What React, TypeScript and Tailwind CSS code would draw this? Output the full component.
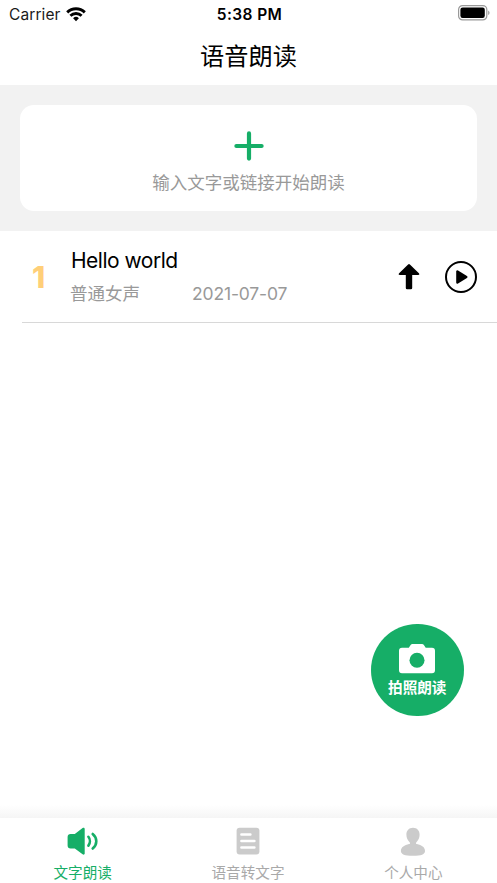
import type { ReactNode } from "react";

const RECORDS = [{ id: 1, title: "Hello world", voice: "普通女声", date: "2021-07-07" }];

function WifiIcon() {
  return (
    <svg width="20" height="15" viewBox="0 0 20 15" fill="none" stroke="#000" strokeWidth="2.9">
      <path d="M1.2 5.4a12.6 12.6 0 0 1 17.6 0" />
      <path d="M4.4 8.8a8.1 8.1 0 0 1 11.2 0" />
      <path d="M10 14.2l-2.9-2.9a4.1 4.1 0 0 1 5.8 0z" fill="#000" stroke="none" />
    </svg>
  );
}

function BatteryIcon() {
  return (
    <svg width="32" height="16" viewBox="0 0 32 16">
      <rect x="0.6" y="0.6" width="28.2" height="14.3" rx="4" fill="none" stroke="#999" strokeWidth="1.2" />
      <rect x="2.4" y="2.6" width="24.4" height="10.4" rx="2.2" fill="#000" />
      <path d="M30.2 5.4c1.8.8 1.8 3.9 0 4.7z" fill="#999" />
    </svg>
  );
}

function SpeakerIcon() {
  return (
    <svg width="32" height="28" viewBox="0 0 32 28" fill="none">
      <path
        d="M3.6 7h4.2l7.8-5.9c.9-.7 2.1-.3 2.1.8v24.6c0 1.1-1.2 1.5-2.1.8l-7.8-5.7H3.6C1.6 21.6.6 20.4.6 18.6V10C.6 8.2 1.7 7 3.6 7z"
        fill="#16ae67"
      />
      <path d="M21.4 9.8c2 2.5 2 6.2 0 8.8" stroke="#16ae67" strokeWidth="2.6" strokeLinecap="round" />
      <path d="M25.7 7c4.8 4 4.8 10.5 0 14.5" stroke="#16ae67" strokeWidth="2.6" strokeLinecap="round" />
    </svg>
  );
}

function DocumentIcon() {
  return (
    <svg width="24" height="28" viewBox="0 0 24 28" fill="none">
      <rect x="0.6" y="0.8" width="22.8" height="26.6" rx="3" fill="#cbcbcb" />
      <path d="M5.4 7.6h9M5.4 14h13M5.4 20.5h13" stroke="#fff" strokeWidth="2.5" strokeLinecap="round" />
    </svg>
  );
}

function PersonIcon() {
  return (
    <svg width="26" height="29" viewBox="0 0 26 29" fill="#cbcbcb">
      <path d="M13 .8c4 0 6.6 2.8 6.6 6.9 0 3-1.3 5.6-3.4 7.7-.5.8-.2 1.5.7 1.7 4.7.9 8.1 3.3 8.1 6.8 0 3.2-3.6 4.9-12 4.9S.9 27.1.9 23.9c0-3.5 3.5-5.9 8.2-6.8.9-.2 1.2-.9.7-1.7-2.1-2.1-3.4-4.7-3.4-7.7C6.4 3.6 9 .8 13 .8z" />
    </svg>
  );
}

function TabItem({ label, active, children }: { label: string; active?: boolean; children: ReactNode }) {
  return (
    <button
      type="button"
      className={`flex flex-1 flex-col items-center pt-[9px] ${active ? "text-[#16ae67]" : "text-[#a9a9a9]"}`}
    >
      <span className="flex h-7 items-start">{children}</span>
      <span className="mt-2 text-[14.6px] leading-[20px]">{label}</span>
    </button>
  );
}

export default function App() {
  return (
    <div className="flex h-screen flex-col overflow-hidden bg-white font-['Inter','Noto_Sans_CJK_SC',sans-serif]">
      {/* Status bar */}
      <div className="grid h-7 shrink-0 grid-cols-3 items-center pr-[7px] pl-[9px]">
        <div className="flex items-end gap-[5px] text-[15.5px] leading-[18px] text-[#1a1a1a]">
          <span className="pt-px tracking-[0.1px]">Carrier</span>
          <span className="pb-[2px]">
            <WifiIcon />
          </span>
        </div>
        <span className="pt-px text-center text-[15.5px] leading-[18px] font-semibold tracking-[0.4px]">5:38 PM</span>
        <div className="flex justify-end pb-[2px]">
          <BatteryIcon />
        </div>
      </div>

      <header className="flex h-[57px] shrink-0 items-center justify-center pt-[2px] text-[24.2px] text-black">
        <h1>语音朗读</h1>
      </header>

      <section className="h-[146px] shrink-0 bg-[#f2f2f2] px-5 pt-5">
        <button type="button" className="flex h-[106px] w-full flex-col items-center rounded-[14px] bg-white pt-[26px]">
          <svg width="30" height="30" viewBox="0 0 30 30" stroke="#16ae67" strokeWidth="4.2" strokeLinecap="round">
            <path d="M15 2.4v25.2M2.4 15h25.2" />
          </svg>
          <span className="mt-[9px] text-[17.5px] leading-[26px] text-[#999]">输入文字或链接开始朗读</span>
        </button>
      </section>

      <main className="flex-1">
        {RECORDS.map((r) => (
          <div key={r.id} className="ml-[22px] flex h-[92px] items-center border-b border-[#d8d8d8] pr-5">
            <span className="w-[49px] pt-0.5 pl-[10px] text-[30px] font-extrabold text-[#ffcf78]">{r.id}</span>
            <div className="flex-1">
              <div className="text-[21px] leading-[30px] tracking-[-0.5px] text-black">{r.title}</div>
              <div className="mt-[5px] flex text-[17.5px] leading-[26px] text-[#999]">
                <span className="-ml-px w-[122px]">{r.voice}</span>
                <span className="tracking-[-0.15px]">{r.date}</span>
              </div>
            </div>
            <svg className="mr-[25px]" width="22" height="28" viewBox="0 0 22 28">
              <path
                d="M10.1 1.5q.9-.9 1.8 0l9 8.8c.9.9.4 1.7-.7 1.7h-6v12.9q0 1.3-1.3 1.3H9.1q-1.3 0-1.3-1.3V12H1.8c-1.1 0-1.6-.8-.7-1.7z"
                fill="#000"
              />
            </svg>
            <svg width="32" height="32" viewBox="0 0 32 32">
              <circle cx="16" cy="16" r="15" fill="none" stroke="#000" strokeWidth="2" />
              <path
                d="M12.4 10.4v11.200l8.900-5.600z"
                fill="#000"
                stroke="#000"
                strokeWidth="2.400"
                strokeLinejoin="round"
              />
            </svg>
          </div>
        ))}
      </main>

      {/* Floating photo button */}
      <button
        type="button"
        className="absolute top-[623.5px] left-[371px] flex size-[92.5px] flex-col items-center rounded-full bg-[#16ae67] pt-[19px] text-white"
      >
        <svg width="38" height="32" viewBox="0 0 38 32">
          <path
            fill="#fff"
            d="M4 4.7h6.8l2-2.9Q13.4 1 14.4 1h9.7q1 0 1.6.8l2 2.9H34Q37 4.7 37 7.7v19.6q0 3-3 3H4q-3 0-3-3V7.7q0-3 3-3z"
          />
          <circle cx="19" cy="17.2" r="7.5" fill="#16ae67" />
        </svg>
        <span className="mt-[3px] text-[14.6px] leading-[20px] font-bold">拍照朗读</span>
      </button>

      {/* Tab bar */}
      <div className="h-[13px] shrink-0 bg-linear-to-b from-white to-[#f5f5f5]" />
      <nav className="flex h-[65px] shrink-0 bg-white pr-px">
        <TabItem label="文字朗读" active>
          <SpeakerIcon />
        </TabItem>
        <TabItem label="语音转文字">
          <DocumentIcon />
        </TabItem>
        <TabItem label="个人中心">
          <PersonIcon />
        </TabItem>
      </nav>
    </div>
  );
}
